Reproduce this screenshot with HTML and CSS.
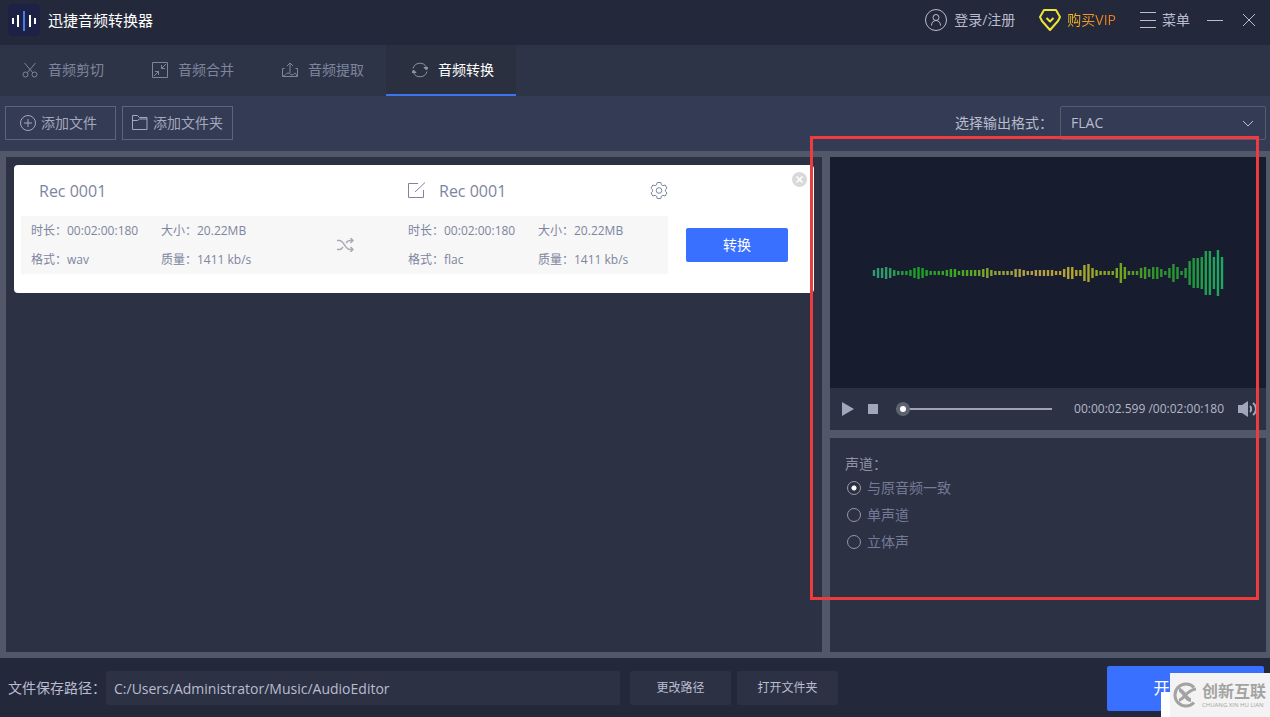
FILE: index.html
```html
<!DOCTYPE html>
<html lang="zh-CN">
<head>
    <meta charset="utf-8">
    <meta name="viewport" content="width=device-width, initial-scale=1">
    <title>迅捷音频转换器</title>
    <link rel="stylesheet" href="styles.css">
</head>
<body>
    <header class="titlebar">
        <svg class="logo" viewBox="0 0 32 32" aria-hidden="true">
            <rect width="32" height="32" rx="5" fill="#1c2145"/>
            <path d="M5 14v6M10 11v12M22 11v12M27 14v6" stroke="#fff" stroke-width="2"/>
            <path d="M16 7v20" stroke="#4a7bea" stroke-width="2"/>
        </svg>
        <h1 class="app-name">迅捷音频转换器</h1>
        <button class="title-btn login" type="button">
            <svg width="24" height="24" viewBox="0 0 24 24" fill="none" stroke="currentColor" aria-hidden="true">
                <circle cx="12" cy="12" r="10.5"/>
                <circle cx="12" cy="9.5" r="3"/>
                <path d="M7.5 17.5c0-3 2-5 4.500-5s4.500 2 4.500 5"/>
            </svg>
            登录/注册
        </button>
        <button class="title-btn vip" type="button">
            <svg width="22" height="22" viewBox="0 0 22 22" fill="none" stroke="#ece43a" stroke-width="2" stroke-linejoin="round" aria-hidden="true">
                <path d="M5 1h12l4 7-2 4-8 9-8-9-2-4z"/>
                <path d="M7.500 9l3.500 3.500L14.500 9"/>
            </svg>
            <span class="vip-text">购买VIP</span>
        </button>
        <button class="title-btn menu" type="button">
            <svg width="16" height="16" viewBox="0 0 16 16" stroke="currentColor" aria-hidden="true">
                <path d="M0 .500h16M0 8.500h16M0 15.500h16"/>
            </svg>
            菜单
        </button>
        <button class="title-btn minimize" type="button" aria-label="最小化">
            <svg width="18" height="14" viewBox="0 0 18 14" stroke="currentColor"><path d="M1 7.500h16"/></svg>
        </button>
        <button class="title-btn close" type="button" aria-label="关闭">
            <svg width="14" height="14" viewBox="0 0 14 14" stroke="currentColor"><path d="M1 1l12 12M13 1L1 13"/></svg>
        </button>
    </header>

    <nav class="tabs">
        <a class="tab" href="#cut">
            <svg width="16" height="16" viewBox="0 0 16 16" fill="none" stroke="currentColor" aria-hidden="true">
                <circle cx="3.500" cy="12.500" r="2.500"/><circle cx="12.500" cy="12.500" r="2.500"/>
                <path d="M2.500 1l8.300 9.800M13.500 1L5.200 10.800"/>
            </svg>
            音频剪切
        </a>
        <a class="tab" href="#merge">
            <svg width="16" height="16" viewBox="0 0 16 16" fill="none" stroke="currentColor" aria-hidden="true">
                <path d="M.500.500h15v15H.500zM14 2l-4.500 4.500M9.500 3v3.500H13M2 14l4.500-4.500M3 9.500h3.500V13"/>
            </svg>
            音频合并
        </a>
        <a class="tab" href="#extract">
            <svg width="16" height="16" viewBox="0 0 16 16" fill="none" stroke="currentColor" aria-hidden="true">
                <path d="M2.500 6.500h-2v8h15v-8h-2M8 11V1M5 4l3-3 3 3M1 14c2 0 3-3 5-3s2 2 4 2 2-2 3-2 1 2 2 3"/>
            </svg>
            音频提取
        </a>
        <a class="tab active" href="#convert" aria-current="page">
            <svg width="16" height="16" viewBox="0 0 16 16" fill="none" stroke="#8e93a5" aria-hidden="true">
                <path d="M1 6.500a7.200 7.200 0 0 1 13.500-1M15 9.500a7.200 7.200 0 0 1-13.500 1"/>
                <path d="M12 5.500h4l-1.500 2.500zM4 10.500H0L1.500 8z" fill="#8e93a5"/>
            </svg>
            音频转换
        </a>
    </nav>

    <div class="toolbar">
        <button class="add-btn" type="button">
            <svg width="16" height="16" viewBox="0 0 16 16" fill="none" stroke="currentColor" aria-hidden="true">
                <circle cx="8" cy="8" r="7.500"/><path d="M8 4v8M4 8h8"/>
            </svg>
            添加文件
        </button>
        <button class="add-btn folder" type="button">
            <svg width="16" height="16" viewBox="0 0 16 16" fill="none" stroke="currentColor" aria-hidden="true">
                <path d="M.500 14.500v-14h5l2 2h7.500v12zM.500 5.500h5l2-1.500H15"/>
            </svg>
            添加文件夹
        </button>
        <label class="format-label" for="format">选择输出格式：</label>
        <div class="select-wrap">
            <select id="format">
                <option>FLAC</option>
            </select>
            <svg class="chevron" width="12" height="8" viewBox="0 0 12 8" fill="none" stroke="currentColor" aria-hidden="true"><path d="M1 1l5 5 5-5"/></svg>
        </div>
    </div>

    <main class="workspace">
        <section class="file-list">
            <article class="file-card">
                <div class="file-main">
                    <div class="file-titles">
                        <h2 class="source-name">Rec 0001</h2>
                        <div class="target-name">
                            <button class="icon-btn" type="button" aria-label="重命名">
                                <svg width="18" height="18" viewBox="0 0 18 18" fill="none" stroke="currentColor">
                                    <path d="M10 1.500H.500v14h15V8M7 10l10-9.500"/>
                                </svg>
                            </button>
                            <h2>Rec 0001</h2>
                            <button class="icon-btn settings" type="button" aria-label="设置">
                                <svg width="18" height="18" viewBox="0 0 18 18" fill="none" stroke="currentColor" stroke-linejoin="round">
                                    <circle cx="9" cy="8.500" r="2.800"/>
                                    <path d="M7.200.5h3.600l.6 2.300 1.500.9 2.300-.7 1.800 3.100-1.600 1.600v1.600l1.600 1.600-1.800 3.100-2.300-.7-1.500.9-.6 2.300H7.200l-.6-2.300-1.500-.9-2.300.7L1 10.900l1.600-1.600V7.700L1 6.100 2.800 3l2.300.7 1.500-.9z"/>
                                </svg>
                            </button>
                        </div>
                    </div>
                    <div class="file-info">
                        <span>时长：00:02:00:180</span>
                        <span>大小：20.22MB</span>
                        <svg class="shuffle" width="17" height="14" viewBox="0 0 17 14" fill="none" stroke="#a9abb3" stroke-width="1.500" aria-hidden="true">
                            <path d="M0 2.500h2.500c4.500 0 5.500 9 10.500 9h3M0 11.500h2.500c1.500 0 2.500-1 3.500-2.500M9 5c1-1.500 2-2.500 4-2.500h3M13.500 0L16 2.500 13.500 5M13.500 9l2.500 2.500-2.500 2.500"/>
                        </svg>
                        <span>时长：00:02:00:180</span>
                        <span>大小：20.22MB</span>
                        <span>格式：wav</span>
                        <span>质量：1411 kb/s</span>
                        <span>格式：flac</span>
                        <span>质量：1411 kb/s</span>
                    </div>
                </div>
                <button class="convert-btn" type="button">转换</button>
                <button class="remove-btn" type="button" aria-label="移除">
                    <svg width="15" height="15" viewBox="0 0 15 15" aria-hidden="true">
                        <circle cx="7.500" cy="7.500" r="7.500" fill="#d9d9d9"/>
                        <path d="M4.500 4.500l6 6M10.500 4.500l-6 6" stroke="#fff" stroke-width="1.500"/>
                    </svg>
                </button>
            </article>
        </section>

        <div class="side">
            <section class="player">
                <div class="wave-box">
                    <svg class="wave" width="352" height="48" viewBox="0 0 352 48" fill="none" aria-hidden="true">
                        <defs>
                            <linearGradient id="waveColor" gradientUnits="userSpaceOnUse" x1="0" y1="0" x2="352" y2="0">
                                <stop offset="0" stop-color="#2f9a78"/>
                                <stop offset=".05" stop-color="#2f9a60"/>
                                <stop offset=".12" stop-color="#18a028"/>
                                <stop offset=".25" stop-color="#42a81c"/>
                                <stop offset=".36" stop-color="#9aa43a"/>
                                <stop offset=".46" stop-color="#b89f48"/>
                                <stop offset=".58" stop-color="#b3a52c"/>
                                <stop offset=".7" stop-color="#78a81e"/>
                                <stop offset=".8" stop-color="#2f9428"/>
                                <stop offset=".92" stop-color="#1f9a40"/>
                                <stop offset="1" stop-color="#20a868"/>
                            </linearGradient>
                        </defs>
                        <path id="waveBars" stroke="url(#waveColor)" stroke-width="2.400"/>
                    </svg>
                </div>
                <div class="controls">
                    <button class="icon-btn" type="button" aria-label="播放">
                        <svg width="12" height="14" viewBox="0 0 12 14" fill="currentColor"><path d="M0 0l12 7-12 7z"/></svg>
                    </button>
                    <button class="icon-btn" type="button" aria-label="停止">
                        <svg width="10" height="10" viewBox="0 0 10 10" fill="currentColor"><path d="M0 0h10v10H0z"/></svg>
                    </button>
                    <input class="seek" type="range" min="0" max="120" value="0" aria-label="播放进度">
                    <span class="time">00:00:02.599 /00:02:00:180</span>
                    <button class="icon-btn" type="button" aria-label="音量">
                        <svg width="20" height="16" viewBox="0 0 20 16" fill="none" stroke="currentColor" stroke-width="2">
                            <path d="M0 4h4l6-4v16l-6-4H0z" fill="currentColor" stroke="none"/>
                            <path d="M12 5c1.500 1.500 1.500 4.500 0 6M15 2c4 3 4 9 0 12"/>
                        </svg>
                    </button>
                </div>
            </section>

            <fieldset class="channels">
                <legend>声道：</legend>
                <label><input type="radio" name="channel" checked>与原音频一致</label>
                <label><input type="radio" name="channel">单声道</label>
                <label><input type="radio" name="channel">立体声</label>
            </fieldset>
        </div>
        <div class="highlight"></div>
    </main>

    <footer class="bottombar">
        <label for="savePath">文件保存路径：</label>
        <input class="path" id="savePath" type="text" value="C:/Users/Administrator/Music/AudioEditor">
        <button class="path-btn" type="button">更改路径</button>
        <button class="path-btn open" type="button">打开文件夹</button>
        <button class="start-btn" type="button">开始转换</button>
        <div class="watermark-edge"></div>
        <div class="watermark">
            <svg width="26" height="26" viewBox="0 0 26 26" fill="none" stroke="#a3a3a3" aria-hidden="true">
                <path d="M22 5.500A11 11 0 1 0 22 20.500" stroke-width="3"/>
                <path d="M7 8c5 0 6 10 12 10" stroke-width="4"/>
                <path d="M7 18c5 0 7-10 17-11" stroke-width="3"/>
            </svg>
            <div class="watermark-text">
                <strong>创新互联</strong>
                <small>CHUANG XIN HU LIAN</small>
            </div>
        </div>
    </footer>

    <script>
        // Height of each bar, left to right
        const levels = [
            6, 10, 10, 12, 10, 6, 4, 4, 4, 6, 10, 12, 10, 6, 4, 4, 4, 4, 6, 8, 8, 4,
            6, 6, 6, 6, 6, 8, 10, 6, 4, 4, 4, 4, 4, 8, 8, 6, 4, 4, 6, 6, 6, 6,
            6, 4, 4, 8, 12, 12, 6, 6, 16, 18, 10, 6, 4, 4, 4, 4, 10, 20, 12, 4, 4, 4,
            10, 12, 8, 12, 12, 8, 4, 10, 18, 12, 4, 10, 24, 30, 30, 32, 44, 44, 32, 46, 32
        ];
        const width = 348;
        const middle = 24;
        const step = width / (levels.length - 1);

        document.getElementById('waveBars').setAttribute('d', levels
            .map((level, i) => `M${2 + i * step} ${middle - level / 2}v${level}`)
            .join(''));
    </script>
</body>
</html>
```
FILE: styles.css
```css
* {
    box-sizing: border-box;
}
body {
    display: flex;
    flex-direction: column;
    min-height: 100vh;
    margin: 0;
    background-color: #24283b;
    color: #b9bdcf;
    font-family: "Open Sans", "Noto Sans CJK SC", sans-serif;
    font-size: 14px;
    line-height: 20px;
}
button, input, select {
    margin: 0;
    padding: 0;
    border: 0;
    background: none;
    color: inherit;
    font: inherit;
}
button {
    cursor: pointer;
}
h1, h2 {
    margin: 0;
    font-weight: normal;
}
svg {
    display: block;
    flex: none;
}

/* Title bar */
.titlebar {
    display: flex;
    align-items: center;
    height: 45px;
    padding: 0 14px 5px 8px;
}
.logo {
    width: 32px;
    height: 32px;
}
.app-name {
    margin-left: 8px;
    margin-right: auto;
    color: #fff;
    font-size: 15px;
}
.title-btn {
    display: flex;
    align-items: center;
    gap: 6px;
    white-space: nowrap;
}
.vip {
    margin-left: 24px;
}
.vip-text {
    background: linear-gradient(90deg, #f5c518, #f0922a 45%, #f07a14);
    -webkit-background-clip: text;
    background-clip: text;
    color: transparent;
}
.menu {
    margin-left: 24px;
}
.minimize {
    margin-left: 16px;
}
.close {
    margin-left: 18px;
}

/* Tabs */
.tabs {
    display: flex;
    height: 51px;
    background-color: #2d3448;
}
.tab {
    display: flex;
    align-items: center;
    gap: 10px;
    padding: 0 22px 0 26px;
    border-bottom: 2px solid transparent;
    color: #7f859a;
    text-decoration: none;
    white-space: nowrap;
}
.tab:first-child {
    padding-left: 22px;
}
.tab.active {
    border-color: #3b73f0;
    background-color: #2b3040;
    color: #fff;
}

/* Toolbar */
.toolbar {
    display: flex;
    align-items: center;
    height: 55px;
    padding: 0 4px 1px 5px;
    background-color: #343b54;
}
.add-btn {
    display: flex;
    align-items: center;
    gap: 5px;
    width: 111px;
    height: 34px;
    padding-left: 14px;
    border: 1px solid #5e647c;
    color: #a3a8bc;
}
.add-btn.folder {
    margin-left: 6px;
    padding-left: 9px;
}
.format-label {
    margin-left: auto;
    margin-right: 7px;
}
.select-wrap {
    position: relative;
    width: 206px;
}
.select-wrap select {
    width: 100%;
    height: 34px;
    padding-left: 10px;
    border: 1px solid #555b70;
    border-radius: 2px;
    appearance: none;
}
.chevron {
    position: absolute;
    top: 14px;
    right: 12px;
    pointer-events: none;
}

/* Workspace */
.workspace {
    position: relative;
    display: flex;
    flex: 1;
    gap: 8px;
    padding: 6px 4px 6px 6px;
    background-color: #52576a;
}
.file-list {
    flex: 1;
    padding: 8px;
    background-color: #2c3144;
}
.file-card {
    position: relative;
    display: flex;
    height: 128px;
    padding: 0 26px 0 7px;
    border-radius: 4px;
    background-color: #fff;
    color: #7d859e;
}
.file-main {
    flex: 1;
}
.file-titles {
    display: grid;
    grid-template-columns: 377fr 260fr;
    align-items: center;
    height: 51px;
    padding-left: 10px;
}
.file-titles h2 {
    font-size: 16px;
}
.source-name {
    padding-left: 8px;
}
.target-name {
    display: flex;
    align-items: center;
    gap: 13px;
}
.icon-btn.settings {
    margin-left: auto;
}
.file-info {
    display: grid;
    grid-template-columns: 130fr 176fr 71fr 130fr 130fr;
    grid-template-rows: 29px 29px;
    align-items: center;
    padding-left: 10px;
    background-color: #f7f7f7;
    font-size: 12px;
    white-space: nowrap;
}
.shuffle {
    grid-row: 1 / 3;
    grid-column: 3;
}
.convert-btn {
    width: 102px;
    height: 34px;
    margin: 63px 0 0 18px;
    border-radius: 2px;
    background-color: #3a70ff;
    color: #fff;
}
.remove-btn {
    position: absolute;
    top: 7px;
    right: 7px;
}

/* Player */
.side {
    display: flex;
    flex-direction: column;
    gap: 8px;
    width: 436px;
}
.wave-box {
    display: flex;
    align-items: center;
    justify-content: center;
    height: 231px;
    background-color: #171c2f;
}
.controls {
    display: flex;
    align-items: center;
    height: 42px;
    padding: 0 8px 0 12px;
    gap: 14px;
    background-color: #2c3144;
    color: #a2a6ba;
}
.seek {
    flex: 1;
    min-width: 0;
    height: 14px;
    margin-left: 4px;
    margin-right: 8px;
    background: linear-gradient(#a0a3b0, #a0a3b0) center / 100% 2px no-repeat;
    appearance: none;
}
.seek::-webkit-slider-thumb {
    width: 14px;
    height: 14px;
    border: 4px solid #5d6170;
    border-radius: 50%;
    background-color: #fff;
    appearance: none;
}
.time {
    color: #b4b8ca;
    font-size: 12px;
    white-space: nowrap;
}

/* Channel options */
.channels {
    display: flex;
    flex: 1;
    flex-direction: column;
    min-width: 0;
    margin: 0;
    padding: 16px 15px;
    border: 0;
    background-color: #2c3144;
    color: #747b96;
}
.channels legend {
    float: left;
    height: 20px;
    padding: 0;
    color: #8e93a8;
}
.channels label {
    display: flex;
    align-items: center;
    gap: 6px;
    height: 27px;
    padding-left: 2px;
}
.channels input {
    width: 14px;
    height: 14px;
    border: 1px solid #9498a8;
    border-radius: 50%;
    appearance: none;
}
.channels input:checked {
    background: radial-gradient(circle, #fff 2px, transparent 3px);
}

/* Marked area around the player and channel options */
.highlight {
    position: absolute;
    top: -15px;
    right: 11px;
    width: 449px;
    height: 464px;
    border: 3px solid #ee3c3e;
    pointer-events: none;
}

/* Bottom bar */
.bottombar {
    position: relative;
    display: flex;
    align-items: center;
    height: 59px;
    padding: 1px 6px 0 8px;
    white-space: nowrap;
}
.path {
    flex: 0 1 514px;
    min-width: 0;
    height: 34px;
    padding: 0 8px;
    border-radius: 2px;
    background-color: #2c3144;
}
.path-btn {
    width: 101px;
    height: 34px;
    margin-left: 10px;
    border-radius: 2px;
    background-color: #2c3144;
    font-size: 12px;
}
.path-btn.open {
    margin-left: 6px;
}
.start-btn {
    width: 157px;
    height: 45px;
    margin-left: auto;
    border-radius: 2px;
    background-color: #3a70ff;
    color: #fff;
    font-size: 16px;
}
.watermark {
    position: absolute;
    right: 0;
    bottom: 0;
    display: flex;
    align-items: center;
    gap: 4px;
    width: 100px;
    height: 44px;
    padding-left: 2px;
    background-color: #f3f3f3;
    color: #a3a3a3;
}
.watermark-edge {
    position: absolute;
    right: 100px;
    bottom: 0;
    width: 9px;
    height: 25px;
    background-color: #fff;
}
.watermark-text {
    display: flex;
    flex-direction: column;
}
.watermark-text strong {
    font-size: 16px;
    line-height: 20px;
}
.watermark-text small {
    font-size: 6px;
    line-height: 8px;
}
```
